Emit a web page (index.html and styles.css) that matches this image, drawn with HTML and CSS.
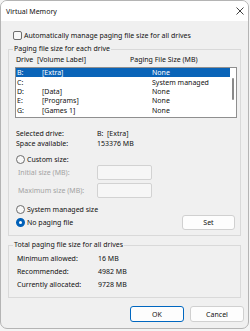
FILE: index.html
```html
<!DOCTYPE html>
<html lang="en">
<head>
    <meta charset="UTF-8">
    <title>Virtual Memory</title>
    <link rel="stylesheet" href="styles.css">
</head>
<body>
<div class="window">
    <div class="titlebar">
        <span class="title">Virtual Memory</span>
        <svg class="close" width="8" height="8" viewBox="0 0 8 8">
            <path d="M0.5 0.5 L7.5 7.5 M7.5 0.5 L0.5 7.5" stroke="#2b2b2b" stroke-width="0.9" fill="none"/>
        </svg>
    </div>
    <div class="content">
        <div class="check-row"><span class="checkbox"></span>Automatically manage paging file size for all drives</div>

        <fieldset class="group group-drives">
            <legend>Paging file size for each drive</legend>
            <div class="list-head">
                <span class="col-drive">Drive&nbsp;&nbsp;[Volume Label]</span>
                <span>Paging File Size (MB)</span>
            </div>
            <div class="listbox">
                <div class="list-rows">
                    <div class="list-row selected"><span class="c-letter">B:</span><span class="c-label">[Extra]</span><span>None</span></div>
                    <div class="list-row"><span class="c-letter">C:</span><span class="c-label"></span><span>System managed</span></div>
                    <div class="list-row"><span class="c-letter">D:</span><span class="c-label">[Data]</span><span>None</span></div>
                    <div class="list-row"><span class="c-letter">E:</span><span class="c-label">[Programs]</span><span>None</span></div>
                    <div class="list-row"><span class="c-letter">G:</span><span class="c-label">[Games 1]</span><span>None</span></div>
                </div>
                <div class="scrollbar"><span class="thumb"></span></div>
            </div>

            <div class="info first"><span class="info-label">Selected drive:</span><span>B:&nbsp;&nbsp;[Extra]</span></div>
            <div class="info"><span class="info-label">Space available:</span><span>153376 MB</span></div>

            <div class="radio-row custom"><span class="radio"></span>Custom size:</div>
            <div class="size-row"><span class="size-label">Initial size (MB):</span><span class="field"></span></div>
            <div class="size-row second"><span class="size-label">Maximum size (MB):</span><span class="field"></span></div>
            <div class="radio-row system"><span class="radio"></span>System managed size</div>
            <div class="radio-row nopaging">
                <span class="radio checked"></span>No paging file
                <button class="btn set">Set</button>
            </div>
        </fieldset>

        <fieldset class="group group-total">
            <legend>Total paging file size for all drives</legend>
            <div class="total-row"><span class="total-label">Minimum allowed:</span><span>16 MB</span></div>
            <div class="total-row"><span class="total-label">Recommended:</span><span>4982 MB</span></div>
            <div class="total-row"><span class="total-label">Currently allocated:</span><span>9728 MB</span></div>
        </fieldset>

        <div class="buttons">
            <button class="btn default">OK</button>
            <button class="btn">Cancel</button>
        </div>
    </div>
</div>
</body>
</html>
```

FILE: styles.css
```css
body {
    margin: 0;
    background-color: #f4f4f4;
    font-family: 'Noto Sans', sans-serif;
    font-size: 7px;
    color: #111;
}
.window {
    width: 249px;
    height: 329px;
    box-sizing: border-box;
    border: 1px solid #b4b4b4;
    border-radius: 7px;
    overflow: hidden;
    background-color: #f0f0f0;
    display: flex;
    flex-direction: column;
}
.titlebar {
    height: 20px;
    background-color: #ffffff;
    display: flex;
    align-items: center;
    padding-left: 5px;
    padding-right: 4px;
}
.title {
    flex: 1;
}
.content {
    flex: 1;
    padding: 0 7px;
}
.check-row {
    height: 13px;
    margin-top: 8px;
    display: flex;
    align-items: center;
    padding-left: 5px;
}
.checkbox {
    width: 7px;
    height: 7px;
    border: 1px solid #6d6d6d;
    border-radius: 2px;
    background-color: #f7f7f7;
    margin-right: 2px;
}
.group {
    margin: 2px 0 0 0;
    padding: 0;
    width: 233px;
    box-sizing: border-box;
    border: 1px solid #d9d9d9;
    min-width: 0;
}
.group legend {
    margin-left: 4px;
    padding: 0 1px;
    line-height: 10px;
    height: 10px;
}
.group-drives {
    padding-bottom: 5px;
}
.list-head {
    height: 10px;
    display: flex;
    align-items: center;
    padding-left: 7px;
}
.col-drive {
    width: 114px;
}
.listbox {
    margin: 3px 0 0 6px;
    width: 222px;
    height: 51px;
    box-sizing: border-box;
    border: 1px solid #8f8f8f;
    background-color: #ffffff;
    display: flex;
}
.list-rows {
    flex: 1;
}
.list-row {
    height: 9.4px;
    display: flex;
    align-items: center;
    padding-left: 1px;
}
.list-row.selected {
    background-color: #0a64b8;
    color: #ffffff;
}
.c-letter {
    width: 25px;
}
.c-label {
    width: 110px;
}
.scrollbar {
    width: 6px;
}
.thumb {
    display: block;
    width: 2px;
    height: 22px;
    margin: 10px 0 0 2px;
    border-radius: 1px;
    background-color: #8a8a8a;
}
.info {
    height: 10px;
    display: flex;
    align-items: center;
    padding-left: 7px;
}
.info.first {
    margin-top: 10px;
}
.info-label {
    width: 81px;
}
.radio-row {
    display: flex;
    align-items: center;
    padding-left: 7px;
}
.radio {
    width: 7px;
    height: 7px;
    border: 1px solid #6d6d6d;
    border-radius: 50%;
    background-color: #f7f7f7;
    margin-right: 2px;
}
.radio.checked {
    width: 3px;
    height: 3px;
    border: 3px solid #0060b8;
    background-color: #ffffff;
}
.radio-row.custom {
    height: 10px;
    margin-top: 6px;
}
.size-row {
    height: 16px;
    display: flex;
    align-items: center;
    padding-left: 9px;
    color: #a3a3a3;
}
.size-row.second {
    margin-top: 2px;
}
.size-label {
    width: 79px;
}
.field {
    width: 55px;
    height: 15px;
    box-sizing: border-box;
    border: 1px solid #d2d2d2;
    border-radius: 2px;
    background-color: #f6f6f6;
}
.radio-row.system {
    height: 10px;
    margin-top: 6px;
}
.radio-row.nopaging {
    height: 15px;
    margin-top: 1px;
}
.btn {
    font-family: 'Noto Sans', sans-serif;
    font-size: 7px;
    color: #111;
    background-color: #fdfdfd;
    border: 1px solid #d0d0d0;
    border-radius: 3px;
    padding: 0;
    width: 54px;
    height: 16px;
}
.btn.set {
    margin-left: auto;
    margin-right: 5px;
    width: 53px;
    height: 15px;
}
.btn.default {
    border-color: #0067c0;
}
.group-total {
    margin-top: 4px;
    padding: 2px 0 6px 0;
}
.total-row {
    height: 13px;
    display: flex;
    align-items: center;
    padding-left: 8px;
}
.total-label {
    width: 81px;
}
.buttons {
    display: flex;
    justify-content: flex-end;
    gap: 6px;
    margin-top: 8px;
    margin-right: -3px;
}
```
